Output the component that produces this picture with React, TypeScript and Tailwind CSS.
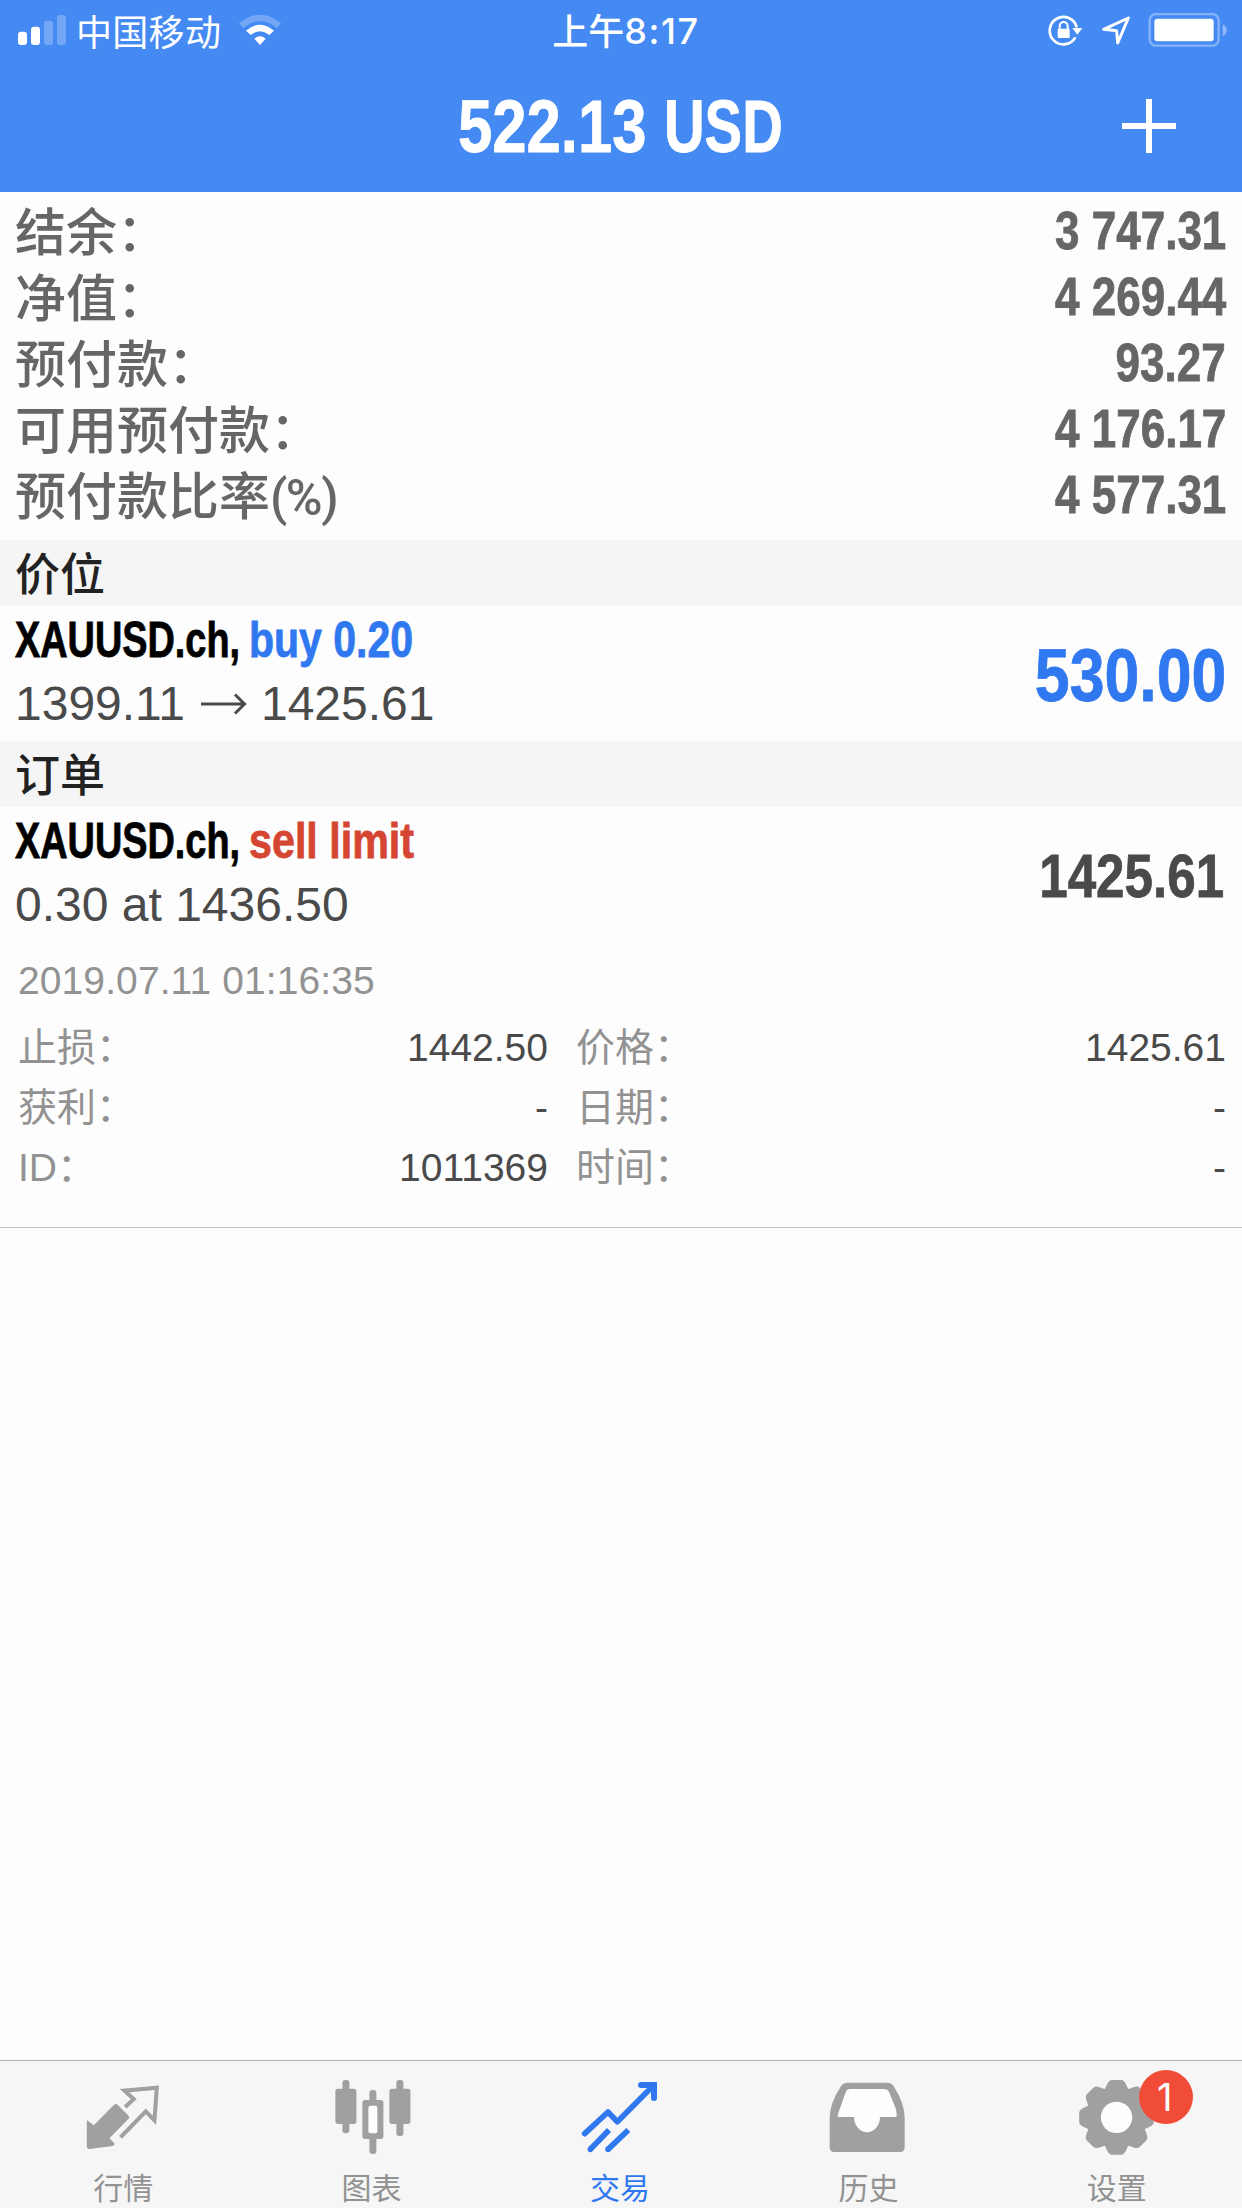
import type { ReactNode } from 'react';
import clsx from 'clsx';

const CONDENSED = "inline-block whitespace-nowrap font-['Liberation_Sans',sans-serif] font-bold [-webkit-text-stroke:0.8px_currentColor]";
const SANS = "font-['Liberation_Sans','Noto_Sans_CJK_SC',sans-serif]";
const CJK = "font-['Noto_Sans_CJK_SC',sans-serif]";

const summary = [
  { label: '结余：', value: '3 747.31' },
  { label: '净值：', value: '4 269.44' },
  { label: '预付款：', value: '93.27' },
  { label: '可用预付款：', value: '4 176.17' },
  { label: '预付款比率', unit: '(%)', value: '4 577.31' },
];

const details = [
  { label: '止损：', value: '1442.50', label2: '价格：', value2: '1425.61' },
  { label: '获利：', value: '-', label2: '日期：', value2: '-' },
  { label: 'ID：', value: '1011369', label2: '时间：', value2: '-' },
];

function StatusBar() {
  return (
    <div className="flex h-[60px] text-white">
      <div className="flex flex-1 items-center pl-[18px]">
        <svg className="h-[30px] w-[49px]" viewBox="54 45 147 90" fill="currentColor">
          <rect x="54" y="95" width="27" height="40" rx="9" />
          <rect x="93" y="80" width="27" height="55" rx="9" />
          <rect x="132" y="62" width="27" height="73" rx="9" opacity=".25" />
          <rect x="171" y="45" width="27" height="90" rx="9" opacity=".25" />
        </svg>
        <span className={`${CJK} ml-[9px] text-[36px] leading-[58px] tracking-[0.3px]`}>中国移动</span>
        <svg className="ml-[18px] h-[30px] w-[42px]" viewBox="720 45 126 90" fill="currentColor">
          <path d="M720 70Q783 18 846 70L833 84Q783 42 733 84Z" opacity=".25" />
          <path d="M741 92Q783 56 825 92L811 105Q783 83 755 105Z" />
          <path d="M766 116Q783 102 800 116L783 135Z" />
        </svg>
      </div>
      <div className="flex items-center justify-center pl-[6px] text-[36px] leading-[60px]">
        <span className={`${CJK} -mt-[2px] font-medium`}>上午</span>
        <span className="mt-[2px] font-['Inter',sans-serif] font-medium tracking-[1.6px]">8:17</span>
      </div>
      <div className="flex flex-1 items-center justify-end pr-[14px]">
        <svg className="h-[34px] w-[180px]" viewBox="145 39 540 102" fill="none" stroke="currentColor">
          <path d="M227 112A41 41 0 1 1 231 82" strokeWidth="8" />
          <path d="M218 84H248L233 104Z" fill="currentColor" stroke="none" />
          <rect x="174" y="86" width="36" height="28" rx="3" fill="currentColor" stroke="none" />
          <path d="M180 88V78a12 12 0 0 1 24 0V88" strokeWidth="6" />
          <path d="M386 54L312 88L351 92L354 129Z" strokeWidth="9" strokeLinejoin="round" />
          <rect x="450" y="42" width="207" height="95" rx="19" strokeWidth="7" opacity=".35" />
          <rect x="464" y="56" width="178" height="68" rx="9" fill="currentColor" stroke="none" />
          <path d="M669 73Q681 79 681 91T669 109Z" fill="currentColor" stroke="none" opacity=".4" />
        </svg>
      </div>
    </div>
  );
}

function Header() {
  return (
    <header className="h-[192px] bg-[#458af3]">
      <StatusBar />
      <div className="grid h-[132px] grid-cols-[1fr_auto_1fr] items-center text-white">
        <h1 className="col-start-2 flex w-[326px] text-[75px] leading-[132px]">
          <span className={`${CONDENSED} w-[206px] origin-left scale-x-[0.822]`}>522.13</span>
          <span className={`${CONDENSED} w-[120px] origin-left scale-x-[0.75]`}>USD</span>
        </h1>
        <svg className="mr-[65px] h-[56px] w-[56px] justify-self-end" viewBox="0 0 56 56" fill="currentColor">
          <path d="M25 1h6v54h-6zM1 25h54v6H1z" />
        </svg>
      </div>
    </header>
  );
}

function SectionTitle({ children }: { children: ReactNode }) {
  return (
    <h2 className={`${CJK} h-[66px] bg-[#f5f5f5] pl-[15px] text-[45px] leading-[63px] font-medium text-[#222]`}>
      {children}
    </h2>
  );
}

function SymbolLine({ symbol, action, actionClass }: { symbol: string; action: string; actionClass: string }) {
  return (
    <p className="flex text-[50px] leading-[63px]">
      <span className={`${CONDENSED} w-[234px] origin-left scale-x-[0.757] text-black`}>{symbol}</span>
      <span className={clsx(CONDENSED, 'origin-left', actionClass)}>{action}</span>
    </p>
  );
}

interface TabProps {
  label: string;
  active?: boolean;
  badge?: string;
  children: ReactNode;
}

function Tab({ label, active, badge, children }: TabProps) {
  return (
    <div className={`relative flex flex-1 flex-col items-center pt-[15px] ${active ? 'text-[#3078f0]' : 'text-[#a0a0a0]'}`}>
      {children}
      <span className={`${CJK} mt-[8px] mr-[2px] text-[30px] leading-[44px] ${active ? '' : 'text-[#929292]'}`}>{label}</span>
      {badge && (
        <span className="absolute top-[9px] left-[145px] flex h-[54px] w-[54px] items-center justify-center rounded-full bg-[#f04c38] pr-[2px] font-['Inter',sans-serif] text-[38px] text-white">
          {badge}
        </span>
      )}
    </div>
  );
}

function TabBar() {
  return (
    <nav className="flex h-[148px] border-t border-[#b2b2b2] bg-[#f6f6f6]">
      <Tab label="行情">
        <svg className="h-[80px] w-[90px] shrink-0" viewBox="237.6 78 270 240" fill="currentColor">
          <path d="M342 165Q348 159 354 165L385 196Q391 202 385 208L329 265L343 279Q346 286 338 288L270 297Q261 298 261 289V210L282 226Z" />
          <path d="M376 171L402 147L374 122L471 113L464 211L438 184L362 262" fill="none" stroke="currentColor" strokeWidth="12" />
        </svg>
      </Tab>
      <Tab label="图表">
        <svg className="h-[80px] w-[90px] shrink-0" viewBox="982.8 78 270 240" fill="currentColor">
          <rect x="1026" y="90" width="21" height="160" rx="9" />
          <rect x="1005" y="116" width="63" height="106" rx="8" />
          <rect x="1188" y="90" width="21" height="168" rx="9" />
          <rect x="1167" y="116" width="63" height="106" rx="8" />
          <rect x="1107" y="120" width="21" height="192" rx="9" />
          <rect x="1086" y="150" width="63" height="117" rx="8" />
          <rect x="1104" y="167" width="27" height="83" rx="6" fill="#fdfdfd" />
        </svg>
      </Tab>
      <Tab label="交易" active>
        <svg className="h-[80px] w-[90px] shrink-0" viewBox="108 78 270 240" fill="none" stroke="currentColor" strokeWidth="17">
          <path d="M134 251L204 186L232 215L338 109" strokeLinecap="round" strokeLinejoin="round" />
          <path d="M303 105H342V144" strokeWidth="18" strokeLinecap="round" />
          <path d="M151 298L207 240M204 298L265 240" />
          <path d="M151 298h.1M204 298h.1" strokeLinecap="round" />
        </svg>
      </Tab>
      <Tab label="历史">
        <svg className="h-[80px] w-[90px] shrink-0" viewBox="853 78 270 240" fill="currentColor">
          <path d="M922 98H1044Q1056 98 1062 109Q1095 160 1095 205V292Q1095 306 1081 306H884Q870 306 870 292V205Q870 160 904 109Q910 98 922 98Z" />
          <path d="M932 117H1034Q1044 117 1048 125L1069 178Q1073 201 1069 201H1021A39 46 0 0 1 943 201H897Q892 201 895 192L918 127Q922 117 932 117Z" fill="#fdfdfd" />
        </svg>
      </Tab>
      <Tab label="设置" badge="1">
        <svg className="h-[80px] w-[90px] shrink-0" viewBox="218.4 78 270 240" fill="currentColor">
          <g transform="translate(349 202)">
            <circle r="91" />
            {[0, 45, 90, 135, 180, 225, 270, 315].map((deg) => (
              <path key={deg} transform={`rotate(${deg})`} d="M-38-80Q-32-90-28-100Q-22-112-14-112H14Q22-112 28-100Q32-90 38-80Z" />
            ))}
            <circle r="47" fill="#fdfdfd" />
          </g>
        </svg>
      </Tab>
    </nav>
  );
}

export default function App() {
  return (
    <div className="flex h-[2208px] w-[1242px] flex-col overflow-hidden bg-[#fdfdfd]">
      <Header />

      <div className="h-[348px] pt-[6px] pr-[16px] pl-[15px] leading-[66px] text-[#666]">
        {summary.map((row) => (
          <div key={row.label} className="flex h-[66px] justify-between">
            <span className={`${CJK} -mt-[2px] text-[51px] font-medium`}>
              {row.label}
              {row.unit && <span className="font-['Roboto',sans-serif] text-[50px] tracking-[-1.5px]">{row.unit}</span>}
            </span>
            <span className={`${CONDENSED} origin-right scale-x-[0.83] text-[53px]`}>{row.value}</span>
          </div>
        ))}
      </div>

      <SectionTitle>价位</SectionTitle>
      <div className="flex h-[135px] items-center justify-between pr-[16px] pl-[15px]">
        <div className="pb-[2px]">
          <SymbolLine symbol="XAUUSD.ch," action="buy 0.20" actionClass="scale-x-[0.82] text-[#3078f0]" />
          <p className={`${SANS} flex items-center text-[48px] leading-[64px] text-[#4a4a4a]`}>
            1399.11
            <svg className="mr-[14px] ml-[16px] h-[22px] w-[46px]" viewBox="0 0 46 22" fill="none" stroke="currentColor" strokeWidth="3">
              <path d="M0 11H44M34 1.500L43.500 11L34 20.500" />
            </svg>
            1425.61
          </p>
        </div>
        <span className={`${CONDENSED} origin-right scale-x-[0.835] pt-[3px] text-[75px] leading-none text-[#3078f0]`}>530.00</span>
      </div>

      <SectionTitle>订单</SectionTitle>
      <div className="h-[421px] border-b border-[#c4c4c4]">
        <div className="flex h-[135px] items-center justify-between pr-[16px] pl-[15px]">
          <div className="pb-[2px]">
            <SymbolLine symbol="XAUUSD.ch," action="sell limit" actionClass="scale-x-[0.825] text-[#d54632]" />
            <p className={`${SANS} text-[48px] leading-[64px] text-[#4a4a4a]`}>0.30 at 1436.50</p>
          </div>
          <span className={`${CONDENSED} mr-[2px] origin-right scale-x-[0.825] pt-[3px] text-[62px] leading-none text-[#4a4a4a]`}>1425.61</span>
        </div>
        <p className={`${SANS} h-[76px] pl-[18px] text-[39px] leading-[78px] tracking-[0.1px] text-[#929292]`}>2019.07.11 01:16:35</p>
        {details.map((row) => (
          <div key={row.label} className={`${SANS} grid h-[60px] grid-cols-[530px_1fr] gap-x-[28px] pr-[16px] pl-[18px] text-[39px] leading-[60px] text-[#4a4a4a]`}>
            <div className="flex justify-between">
              <span className="text-[#929292]">{row.label}</span>
              <span>{row.value}</span>
            </div>
            <div className="flex justify-between">
              <span className="text-[#929292]">{row.label2}</span>
              <span>{row.value2}</span>
            </div>
          </div>
        ))}
      </div>

      <div className="flex-1" />
      <TabBar />
    </div>
  );
}
